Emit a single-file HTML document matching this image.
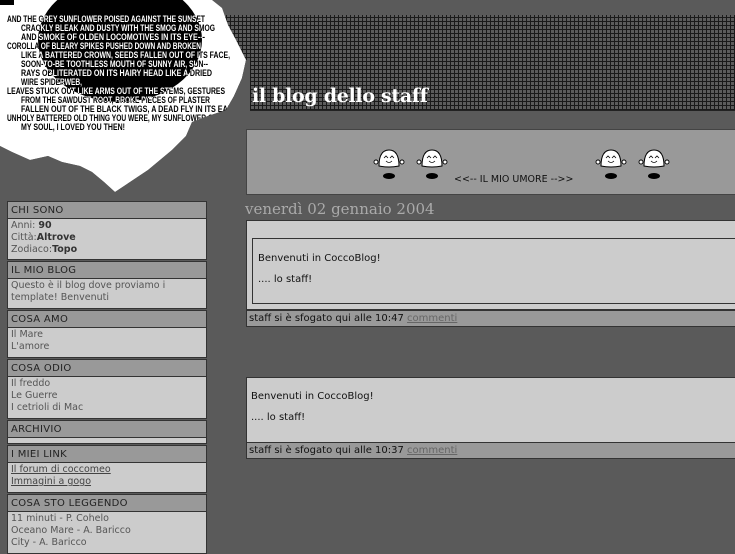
<!DOCTYPE html>
<html><head><meta charset="utf-8"><style>
*{margin:0;padding:0;box-sizing:border-box}
body{width:735px;height:551px;background:#5a5a5a;position:relative;overflow:hidden;font-family:"DejaVu Sans","Liberation Sans",sans-serif}
.grid{position:absolute;left:222px;top:15px;width:513px;height:96px;background-color:#5c5c5c;
background-image:repeating-linear-gradient(90deg,#1a1a1a 0 1px,transparent 1px 4px),repeating-linear-gradient(0deg,#1a1a1a 0 1px,transparent 1px 4px);border-bottom:1px solid #222}
.title{position:absolute;left:252px;top:85px;font-family:"DejaVu Serif","Liberation Serif",serif;font-weight:bold;font-size:19px;color:#fff;letter-spacing:-0.3px}
.box{position:absolute;left:7px;width:200px;border:1px solid #333;background:#ccc;font-size:9.5px;color:#555;line-height:12px}
.box .h{background:#999;border-bottom:1px solid #333;height:17px;line-height:17px;padding-left:3px;font-size:10px;color:#222;letter-spacing:.3px}
.box .c{padding:1px 3px}
.box b{color:#333}
.box u{color:#444}
.mood{position:absolute;left:246px;top:129px;width:489px;height:66px;background:#999;border:1px solid #444;border-right:none}
.date{position:absolute;left:245px;top:200px;font-family:"DejaVu Serif","Liberation Serif",serif;font-size:15px;color:#aaa}
.post{position:absolute;left:246px;width:489px;background:#ccc;border:1px solid #333;border-right:none;font-size:10px;color:#111}
.foot{position:absolute;left:246px;width:489px;background:#999;border:1px solid #333;border-right:none;height:17px;line-height:15px;padding-left:2px;font-size:10px;color:#111}
.foot u{color:#666}
.t{font-family:"Liberation Sans Narrow","Liberation Sans",sans-serif;font-size:9px;font-weight:bold}
.ell{position:absolute;left:38px;top:-22px;width:164px;height:124px;border-radius:50%;overflow:hidden;background:#000}
</style></head><body>
<div class="grid"></div>
<svg style="position:absolute;left:0;top:0" width="250" height="200">
<polygon fill="#fff" points="0,0 212,0 222,8 228,25 236,40 246,60 242,78 234,96 226,110 208,116 192,122 186,136 172,150 160,160 148,170 130,182 115,192 104,182 92,172 80,166 62,162 48,156 30,160 12,152 0,146"/>
<rect x="0" y="0" width="14" height="5" fill="#000"/>
</svg>
<svg style="position:absolute;left:0;top:0" width="250" height="200"><g class="t" fill="#000">
<text x="7" y="22" textLength="198" lengthAdjust="spacingAndGlyphs">AND THE GREY SUNFLOWER POISED AGAINST THE SUNSET</text>
<text x="21" y="31" textLength="194" lengthAdjust="spacingAndGlyphs">CRACKLY BLEAK AND DUSTY WITH THE SMOG AND SMOG</text>
<text x="21" y="40" textLength="184" lengthAdjust="spacingAndGlyphs">AND SMOKE OF OLDEN LOCOMOTIVES IN ITS EYE---</text>
<text x="7" y="49" textLength="194" lengthAdjust="spacingAndGlyphs">COROLLA OF BLEARY SPIKES PUSHED DOWN AND BROKEN</text>
<text x="21" y="58" textLength="209" lengthAdjust="spacingAndGlyphs">LIKE A BATTERED CROWN, SEEDS FALLEN OUT OF ITS FACE,</text>
<text x="21" y="67" textLength="187" lengthAdjust="spacingAndGlyphs">SOON-TO-BE TOOTHLESS MOUTH OF SUNNY AIR, SUN--</text>
<text x="21" y="76" textLength="191" lengthAdjust="spacingAndGlyphs">RAYS OBLITERATED ON ITS HAIRY HEAD LIKE A DRIED</text>
<text x="21" y="85" textLength="61" lengthAdjust="spacingAndGlyphs">WIRE SPIDERWEB,</text>
<text x="7" y="94" textLength="218" lengthAdjust="spacingAndGlyphs">LEAVES STUCK OUT LIKE ARMS OUT OF THE STEMS, GESTURES</text>
<text x="21" y="103" textLength="189" lengthAdjust="spacingAndGlyphs">FROM THE SAWDUST ROOT, BROKE PIECES OF PLASTER</text>
<text x="21" y="112" textLength="214" lengthAdjust="spacingAndGlyphs">FALLEN OUT OF THE BLACK TWIGS, A DEAD FLY IN ITS EAR,</text>
<text x="7" y="121" textLength="206" lengthAdjust="spacingAndGlyphs">UNHOLY BATTERED OLD THING YOU WERE, MY SUNFLOWER O</text>
<text x="21" y="130" textLength="104" lengthAdjust="spacingAndGlyphs">MY SOUL, I LOVED YOU THEN!</text>
</g></svg>
<div class="ell"><svg style="position:absolute;left:-38px;top:22px" width="250" height="200"><g class="t" fill="#fff">
<text x="7" y="22" textLength="198" lengthAdjust="spacingAndGlyphs">AND THE GREY SUNFLOWER POISED AGAINST THE SUNSET</text>
<text x="21" y="31" textLength="194" lengthAdjust="spacingAndGlyphs">CRACKLY BLEAK AND DUSTY WITH THE SMOG AND SMOG</text>
<text x="21" y="40" textLength="184" lengthAdjust="spacingAndGlyphs">AND SMOKE OF OLDEN LOCOMOTIVES IN ITS EYE---</text>
<text x="7" y="49" textLength="194" lengthAdjust="spacingAndGlyphs">COROLLA OF BLEARY SPIKES PUSHED DOWN AND BROKEN</text>
<text x="21" y="58" textLength="209" lengthAdjust="spacingAndGlyphs">LIKE A BATTERED CROWN, SEEDS FALLEN OUT OF ITS FACE,</text>
<text x="21" y="67" textLength="187" lengthAdjust="spacingAndGlyphs">SOON-TO-BE TOOTHLESS MOUTH OF SUNNY AIR, SUN--</text>
<text x="21" y="76" textLength="191" lengthAdjust="spacingAndGlyphs">RAYS OBLITERATED ON ITS HAIRY HEAD LIKE A DRIED</text>
<text x="21" y="85" textLength="61" lengthAdjust="spacingAndGlyphs">WIRE SPIDERWEB,</text>
<text x="7" y="94" textLength="218" lengthAdjust="spacingAndGlyphs">LEAVES STUCK OUT LIKE ARMS OUT OF THE STEMS, GESTURES</text>
<text x="21" y="103" textLength="189" lengthAdjust="spacingAndGlyphs">FROM THE SAWDUST ROOT, BROKE PIECES OF PLASTER</text>
<text x="21" y="112" textLength="214" lengthAdjust="spacingAndGlyphs">FALLEN OUT OF THE BLACK TWIGS, A DEAD FLY IN ITS EAR,</text>
<text x="7" y="121" textLength="206" lengthAdjust="spacingAndGlyphs">UNHOLY BATTERED OLD THING YOU WERE, MY SUNFLOWER O</text>
<text x="21" y="130" textLength="104" lengthAdjust="spacingAndGlyphs">MY SOUL, I LOVED YOU THEN!</text>
</g></svg></div>
<svg style="position:absolute;left:0;top:0" width="250" height="200">
<polygon fill="#5a5a5a" points="0,146 12,152 30,160 48,156 62,162 80,166 92,172 104,182 115,192 130,182 148,170 160,160 172,150 186,136 192,122 208,116 226,110 234,96 242,78 246,60 250,60 250,200 0,200"/>
</svg>
<div class="title">il blog dello staff</div>

<div class="box" style="top:201px;height:59px"><div class="h">CHI SONO</div><div class="c">Anni: <b>90</b><br>Città:<b>Altrove</b><br>Zodiaco:<b>Topo</b></div></div>
<div class="box" style="top:261px;height:48px"><div class="h">IL MIO BLOG</div><div class="c">Questo è il blog dove proviamo i template! Benvenuti</div></div>
<div class="box" style="top:310px;height:48px"><div class="h">COSA AMO</div><div class="c">Il Mare<br>L'amore</div></div>
<div class="box" style="top:359px;height:60px"><div class="h">COSA ODIO</div><div class="c">Il freddo<br>Le Guerre<br>I cetrioli di Mac</div></div>
<div class="box" style="top:420px;height:24px"><div class="h">ARCHIVIO</div></div>
<div class="box" style="top:445px;height:48px"><div class="h">I MIEI LINK</div><div class="c"><u>Il forum di coccomeo</u><br><u>Immagini a gogo</u></div></div>
<div class="box" style="top:494px;height:60px"><div class="h">COSA STO LEGGENDO</div><div class="c">11 minuti - P. Cohelo<br>Oceano Mare - A. Baricco<br>City - A. Baricco</div></div>

<div class="mood">
<svg width="489" height="66">
<defs><g id="sm"><circle cx="-13" cy="0" r="2" fill="#fff" stroke="#000" stroke-width=".9"/><circle cx="13" cy="0" r="2" fill="#fff" stroke="#000" stroke-width=".9"/><path d="M-10,4 Q-10,-12 0,-12 Q10,-12 10,4 Q0,6 -10,4 Z" fill="#fff" stroke="#000" stroke-width="1"/><path d="M-5,-4 L-3,-6 L-1,-4 M1,-4 L3,-6 L5,-4 M-3,-1 Q0,2 3,-1" stroke="#000" stroke-width=".8" fill="none"/><ellipse cx="0" cy="14" rx="6" ry="3" fill="#000"/></g></defs>
<use href="#sm" x="142" y="32"/><use href="#sm" x="185" y="32"/><use href="#sm" x="364" y="32"/><use href="#sm" x="407" y="32"/>
<text x="207" y="52" font-size="9.5" fill="#111" font-family="DejaVu Sans,sans-serif">&lt;&lt;-- IL MIO UMORE --&gt;&gt;</text>
</svg></div>
<div class="date">venerdì 02 gennaio 2004</div>

<div class="post" style="top:220px;height:90px">
<div style="position:absolute;left:5px;top:17px;right:0;height:66px;border:1px solid #333;border-right:none;padding:14px 5px">Benvenuti in CoccoBlog!<div style="margin-top:10px">.... lo staff!</div></div>
</div>
<div class="foot" style="top:310px">staff si è sfogato qui alle 10:47 <u>commenti </u></div>

<div class="post" style="top:377px;height:66px;padding:13px 4px">Benvenuti in CoccoBlog!<div style="margin-top:10px">.... lo staff!</div></div>
<div class="foot" style="top:442px">staff si è sfogato qui alle 10:37 <u>commenti </u></div>
</body></html>
